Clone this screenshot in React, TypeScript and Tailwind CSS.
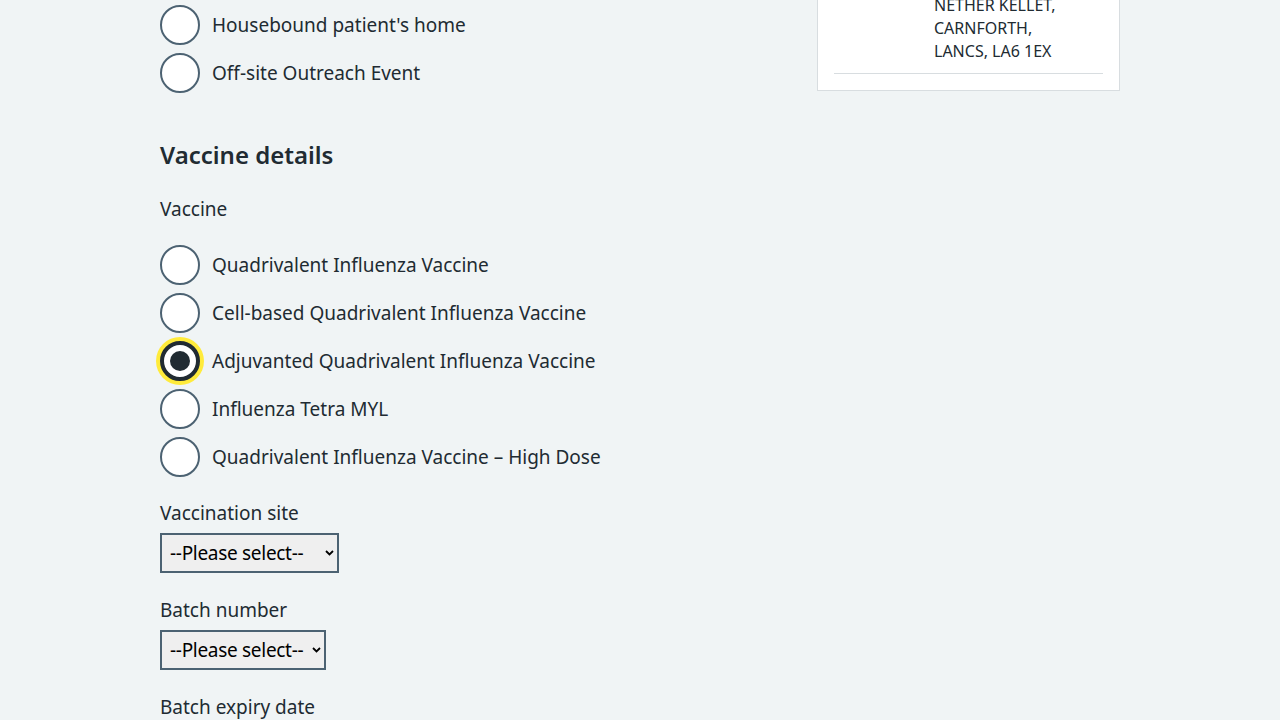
const radioBase =
  "flex h-10 w-10 shrink-0 items-center justify-center rounded-full border-2 border-[#4c6272] bg-white";

function Radio({ label, checked }: { label: string; checked?: boolean }) {
  return (
    <div className="mb-2 flex items-center gap-3">
      {checked ? (
        <span className="flex h-10 w-10 shrink-0 items-center justify-center rounded-full border-4 border-[#212b32] bg-white shadow-[0_0_0_4px_#ffeb3b]">
          <span className="h-5 w-5 rounded-full bg-[#212b32]" />
        </span>
      ) : (
        <span className={radioBase} />
      )}
      <span className="text-[19px] leading-7">{label}</span>
    </div>
  );
}

function Select({ width }: { width: string }) {
  return (
    <div className={"relative mt-[6px] " + width}>
      <select className="block h-10 w-full appearance-none border-2 border-[#4c6272] bg-[#efefef] pl-2 pr-[12px] text-[19px] leading-none tracking-[-0.3px] text-black">
        <option>--Please select--</option>
      </select>
      {/* chevron */}
      <svg
        className="pointer-events-none absolute right-[5px] top-[17px]"
        width="9"
        height="6"
        viewBox="0 0 9 6"
        fill="none"
      >
        <path d="M1 1l3.5 3.5L8 1" stroke="#000" strokeWidth="1.8" />
      </svg>
    </div>
  );
}

const vaccines = [
  "Quadrivalent Influenza Vaccine",
  "Cell-based Quadrivalent Influenza Vaccine",
  "Adjuvanted Quadrivalent Influenza Vaccine",
  "Influenza Tetra MYL",
  "Quadrivalent Influenza Vaccine – High Dose",
];

export default function App() {
  return (
    <div className="h-[720px] overflow-hidden bg-[#f0f4f5] font-['Noto_Sans',sans-serif] text-[#212b32]">
      <div className="mx-auto flex w-[960px]">
        {/* form column */}
        <div className="w-[630px] pt-[5px]">
          <Radio label="Housebound patient's home" />
          <Radio label="Off-site Outreach Event" />

          <h2 className="mt-[46px] text-[24px] font-semibold leading-8">Vaccine details</h2>
          <p className="mt-6 text-[19px] leading-7">Vaccine</p>
          <div className="mt-[22px]">
            {vaccines.map((v, i) => (
              <Radio key={v} label={v} checked={i === 2} />
            ))}
          </div>

          <label className="mt-[22px] block text-[19px] leading-7">Vaccination site</label>
          <Select width="w-[179px]" />

          <label className="mt-[23px] block text-[19px] leading-7">Batch number</label>
          <Select width="w-[166px]" />

          <label className="mt-[23px] block text-[19px] leading-7">Batch expiry date</label>
        </div>

        {/* summary card */}
        <div className="ml-auto w-[303px]">
          <div className="mt-[-31px] border border-[#d8dde0] bg-white px-4 pt-4 pb-4">
            <div className="flex border-b border-[#d8dde0] pt-2 pb-[10px]">
              <div className="w-[100px] shrink-0" />
              <div className="text-base leading-[23px]">
                <div>NETHER KELLET,</div>
                <div>CARNFORTH,</div>
                <div>LANCS, LA6 1EX</div>
              </div>
            </div>
          </div>
        </div>
      </div>
    </div>
  );
}
